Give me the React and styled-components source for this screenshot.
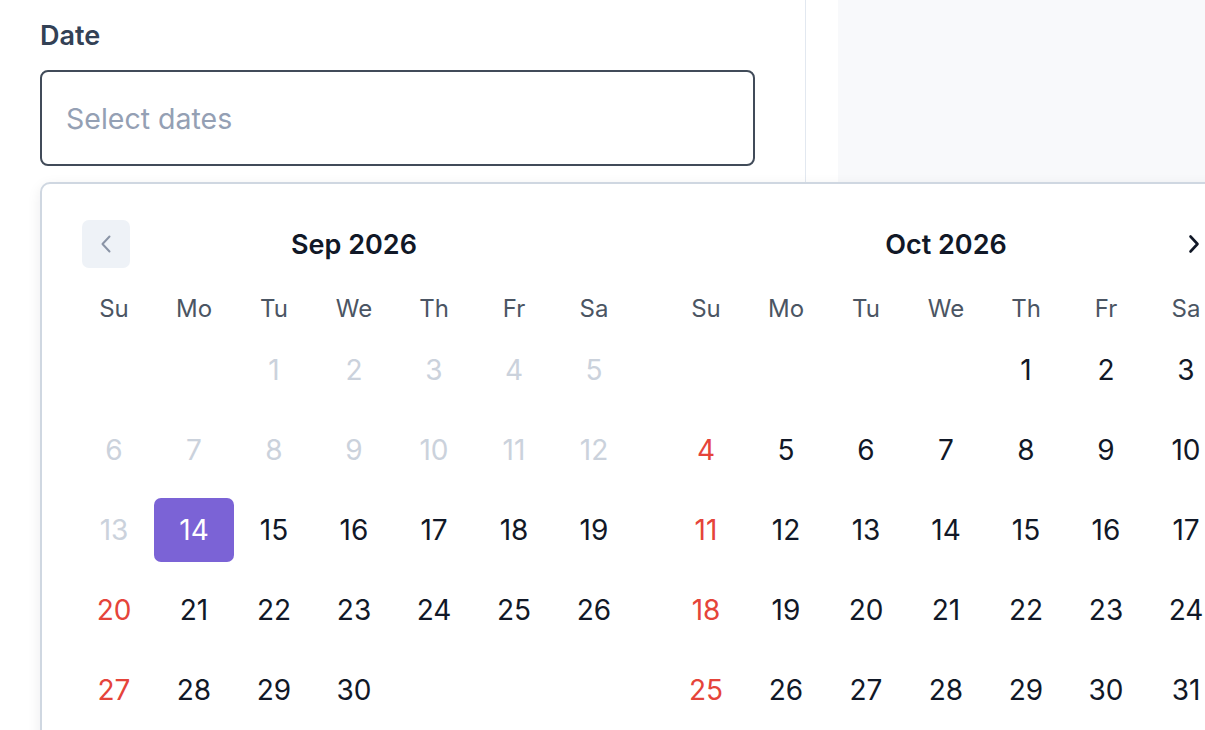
import React from "react";
import styled, { createGlobalStyle } from "styled-components";

const GlobalStyle = createGlobalStyle`
    html, body {
        margin: 0;
        padding: 0;
        background: #ffffff;
    }
    body {
        font-family: Inter, "Noto Sans", "Liberation Sans", sans-serif;
    }
`;

const WEEKDAYS = ["Su", "Mo", "Tu", "We", "Th", "Fr", "Sa"];

const MONTHS = [
    { title: "Sep 2026", offset: 2, days: 30, selected: 14, disabledBefore: 14, nav: "prev" },
    { title: "Oct 2026", offset: 4, days: 31, selected: null, disabledBefore: 0, nav: "next" },
];

function ChevronLeft() {
    return (
        <svg width="16" height="22" viewBox="0 0 16 22" fill="none">
            <path d="M11.5 3.5 L4.5 11 L11.5 18.5" stroke="#8a94a6" strokeWidth="2" strokeLinecap="round" strokeLinejoin="round" />
        </svg>
    );
}

function ChevronRight() {
    return (
        <svg width="16" height="22" viewBox="0 0 16 22" fill="none">
            <path d="M4.5 3.5 L11.5 11 L4.5 18.5" stroke="#111827" strokeWidth="2.6" strokeLinecap="round" strokeLinejoin="round" />
        </svg>
    );
}

function Month({ month }) {
    const cells = [];
    for (let i = 0; i < month.offset; i++) cells.push(null);
    for (let d = 1; d <= month.days; d++) cells.push(d);

    return (
        <MonthBox>
            <MonthHeader>
                {month.nav === "prev" ? (
                    <NavBtn $filled>
                        <ChevronLeft />
                    </NavBtn>
                ) : (
                    <span />
                )}
                <MonthTitle>{month.title}</MonthTitle>
                {month.nav === "next" ? (
                    <NavBtn>
                        <ChevronRight />
                    </NavBtn>
                ) : (
                    <span />
                )}
            </MonthHeader>
            <WeekRow>
                {WEEKDAYS.map((w) => (
                    <WeekDay key={w}>{w}</WeekDay>
                ))}
            </WeekRow>
            <DaysGrid>
                {cells.map((d, i) => {
                    if (d === null) return <Day key={`e${i}`} />;
                    const disabled = d < month.disabledBefore;
                    const sunday = i % 7 === 0;
                    const tone = month.selected === d ? "selected" : disabled ? "disabled" : sunday ? "sunday" : "normal";
                    return (
                        <Day key={d} $tone={tone}>
                            {d}
                        </Day>
                    );
                })}
            </DaysGrid>
        </MonthBox>
    );
}

export default function App() {
    return (
        <>
            <GlobalStyle />
            <Page>
                <TopRow>
                    <FormColumn>
                        <Label>Date</Label>
                        <DateInput placeholder="Select dates" readOnly />
                    </FormColumn>
                    <SidePanel />
                </TopRow>
                <Popover>
                    {MONTHS.map((m) => (
                        <Month key={m.title} month={m} />
                    ))}
                </Popover>
            </Page>
        </>
    );
}

// --- STYLES ---

const Page = styled.div`
    position: relative;
    width: 1205px;
    height: 730px;
    overflow: hidden;
    background: #ffffff;
`;

const TopRow = styled.div`
    display: flex;
    height: 182px;
`;

const FormColumn = styled.div`
    box-sizing: border-box;
    width: 806px;
    padding: 20px 50px 0 40px;
    border-right: 1px solid #e2e8f0;
    display: flex;
    flex-direction: column;
`;

const Label = styled.label`
    font-size: 27px;
    line-height: 32px;
    font-weight: 600;
    color: #334155;
    margin-bottom: 18px;
`;

const DateInput = styled.input`
    box-sizing: border-box;
    width: 100%;
    height: 96px;
    border: 2px solid #414b59;
    border-radius: 8px;
    padding: 0 24px;
    font-family: Inter, "Noto Sans", "Liberation Sans", sans-serif;
    font-size: 28.5px;
    color: #111827;
    background: #ffffff;
    outline: none;
    &::placeholder {
        color: #94a0b4;
    }
`;

const SidePanel = styled.div`
    flex: 1;
    margin-left: 32px;
    background: #f8f9fb;
`;

const Popover = styled.div`
    position: absolute;
    top: 182px;
    left: 40px;
    display: flex;
    gap: 32px;
    padding: 36px 32px 40px;
    background: #ffffff;
    border: 2px solid #cfd7e1;
    border-radius: 10px;
    box-shadow: 0 4px 14px rgba(15, 23, 42, 0.08);
`;

const MonthBox = styled.div`
    width: 560px;
`;

const MonthHeader = styled.div`
    display: grid;
    grid-template-columns: 48px 1fr 48px;
    align-items: center;
    height: 48px;
    padding: 0 8px;
`;

const MonthTitle = styled.div`
    text-align: center;
    font-size: 27px;
    font-weight: 600;
    color: #111827;
`;

const NavBtn = styled.button`
    width: 48px;
    height: 48px;
    border: none;
    border-radius: 7px;
    padding: 0;
    display: flex;
    align-items: center;
    justify-content: center;
    background: ${(p) => (p.$filled ? "#eef2f7" : "transparent")};
    cursor: pointer;
`;

const WeekRow = styled.div`
    display: grid;
    grid-template-columns: repeat(7, 80px);
    height: 40px;
    margin: 20px 0 10px;
`;

const WeekDay = styled.div`
    display: flex;
    align-items: center;
    justify-content: center;
    font-size: 24px;
    color: #4b5563;
`;

const toneColor = {
    normal: "#111827",
    disabled: "#cbd2dc",
    sunday: "#e5443a",
    selected: "#ffffff",
};

const DaysGrid = styled.div`
    display: grid;
    grid-template-columns: repeat(7, 80px);
    grid-auto-rows: 64px;
    row-gap: 16px;
`;

const Day = styled.div`
    display: flex;
    align-items: center;
    justify-content: center;
    font-size: 28px;
    border-radius: 7px;
    color: ${(p) => toneColor[p.$tone] || "#111827"};
    background: ${(p) => (p.$tone === "selected" ? "#7b63d6" : "transparent")};
`;
